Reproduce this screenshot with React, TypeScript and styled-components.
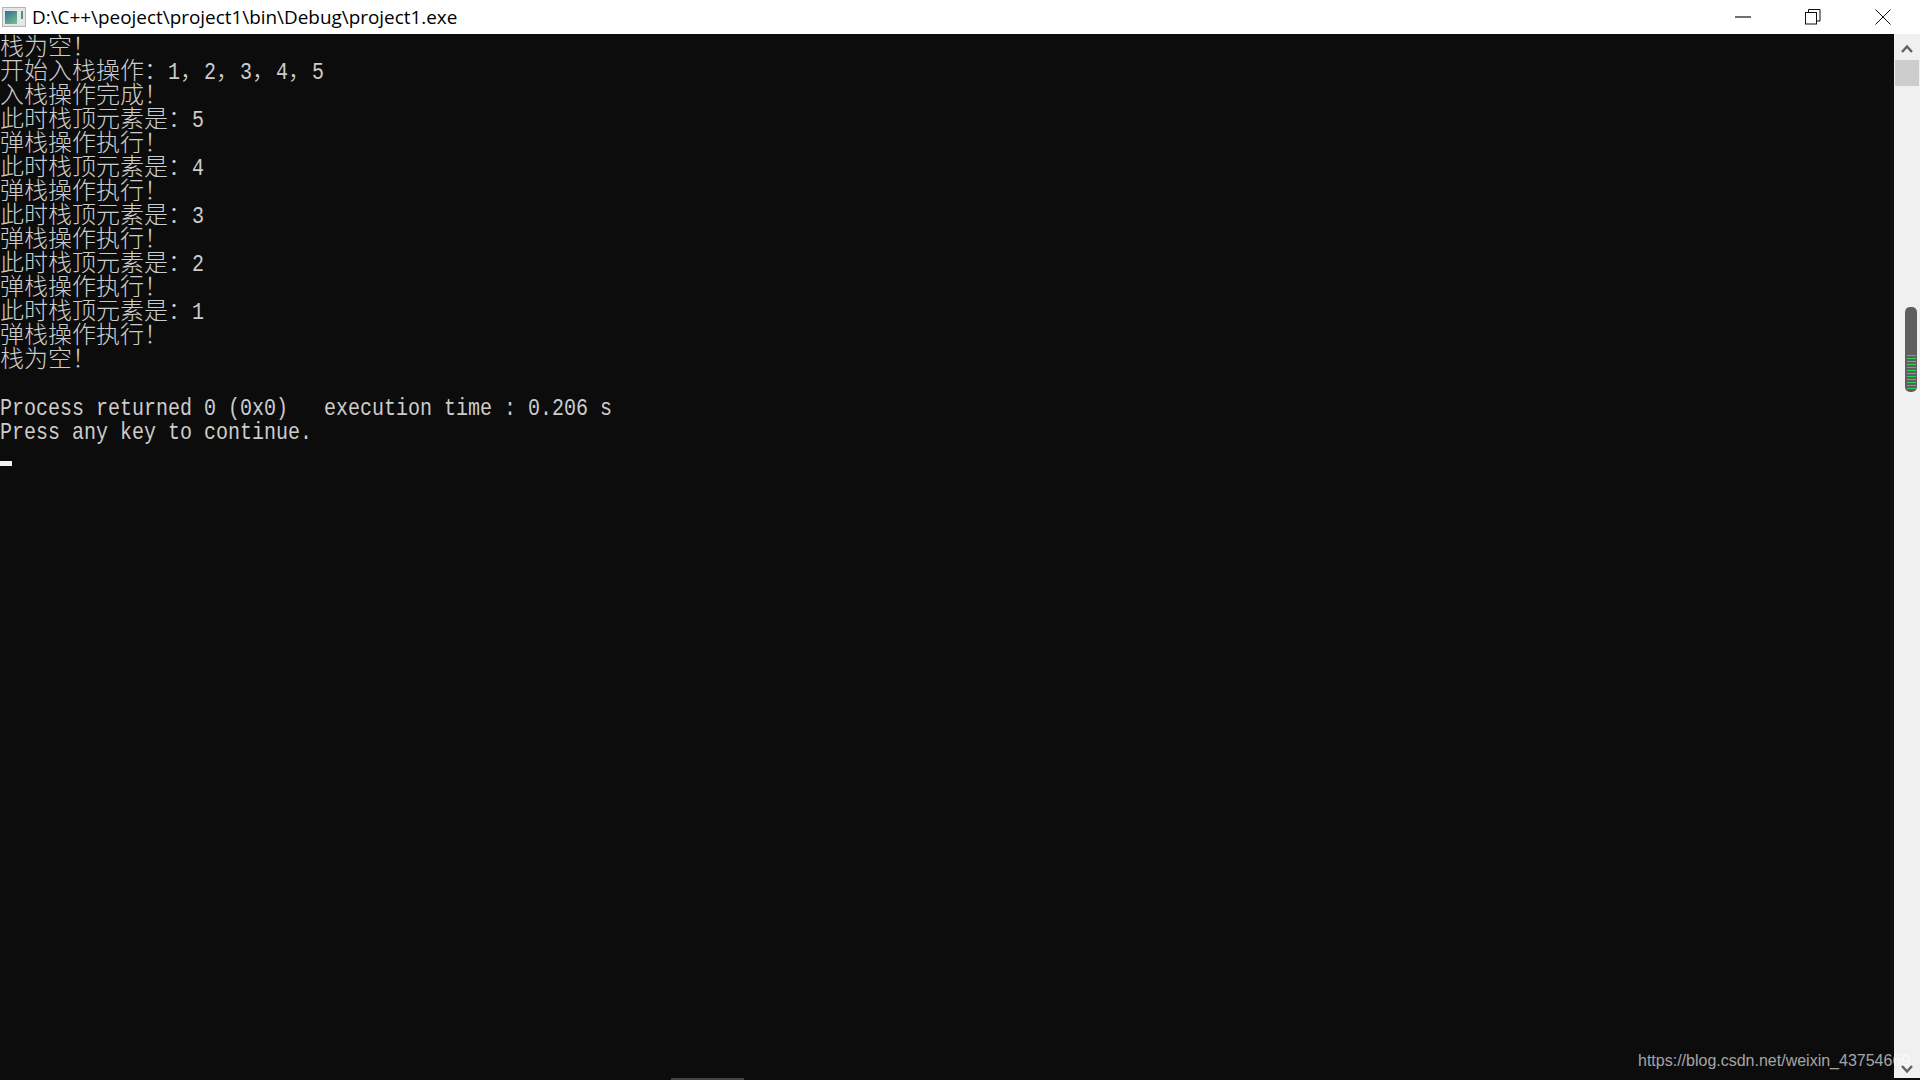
import styled, { createGlobalStyle } from "styled-components";

const GlobalStyle = createGlobalStyle`
  html, body {
    margin: 0;
    padding: 0;
    background: #0c0c0c;
    overflow: hidden;
  }
`;

const Window = styled.div`
  position: relative;
  width: 1920px;
  height: 1080px;
  display: flex;
  flex-direction: column;
  overflow: hidden;
  background: #0c0c0c;
`;

const TitleBar = styled.div`
  height: 34px;
  flex: none;
  display: flex;
  align-items: center;
  background: #fff;
`;

const AppIcon = styled.svg`
  width: 24px;
  height: 20px;
  margin: 0 6px 0 2px;
  flex: none;
`;

const Title = styled.div`
  flex: 1;
  font-family: "Open Sans", "Noto Sans", sans-serif;
  font-size: 18.9px;
  color: #000;
  white-space: nowrap;
`;

const Controls = styled.div`
  display: flex;
  height: 100%;
  padding-right: 2px;
`;

const ControlButton = styled.div`
  width: 70px;
  height: 34px;
  display: flex;
  align-items: center;
  justify-content: center;
`;

const Body = styled.div`
  flex: 1;
  display: flex;
  min-height: 0;
`;

const Console = styled.div`
  flex: 1;
  color: #cccccc;
  font-family: "Noto Sans CJK SC", sans-serif;
  font-size: 24px;
  font-weight: 300;
  line-height: 22px;
`;

const Line = styled.div`
  height: 24px;
  white-space: pre;
`;

// the console font is 12px wide per latin char at 24px tall, squeeze the mono to fit
const Ascii = styled.span`
  display: inline-block;
  margin-right: -2.4px;
  font-family: "Liberation Mono", monospace;
  font-size: 24px;
  font-weight: 400;
  transform: scaleX(0.8333);
  transform-origin: left center;
`;

const Cursor = styled.div`
  width: 12px;
  height: 5px;
  margin-top: 19px;
  background: #f2f2f2;
`;

const ScrollBar = styled.div`
  width: 26px;
  flex: none;
  height: 1044px;
  display: flex;
  flex-direction: column;
  align-items: center;
  background: #f0f0f0;
`;

const Arrow = styled.svg`
  width: 12px;
  height: 9px;
  flex: none;
`;

const TopArrow = styled(Arrow)`
  margin-top: 10px;
`;

const Thumb = styled.div`
  width: 24px;
  height: 26px;
  margin-top: 7px;
  background: #cdcdcd;
`;

const BottomArrow = styled(Arrow)`
  margin-top: auto;
  margin-bottom: 4px;
`;

const VolumeOverlay = styled.div`
  position: absolute;
  left: 1905px;
  top: 307px;
  width: 12px;
  height: 85px;
  box-sizing: border-box;
  padding: 48px 1px 0;
  display: flex;
  flex-direction: column;
  gap: 2px;
  align-items: center;
  border-radius: 5px;
  background: #5f5f5f;
`;

const VolumeTick = styled.div`
  width: 9px;
  height: 1px;
  background: #2fd158;
`;

const Watermark = styled.div`
  position: absolute;
  left: 1638px;
  top: 1051px;
  font-family: "Liberation Sans", sans-serif;
  font-size: 16px;
  line-height: 20px;
  color: rgba(255, 255, 255, 0.64);
  white-space: nowrap;
`;

const HomeBar = styled.div`
  position: absolute;
  left: 671px;
  bottom: 0;
  width: 73px;
  height: 2px;
  background: #444;
`;

const ticks = Array.from({ length: 12 });

export default function App() {
  return (
    <>
      <GlobalStyle />
      <Window>
        <TitleBar>
          <AppIcon viewBox="0 0 24 20">
            <defs>
              <linearGradient id="screen" x1="0" y1="0" x2="0.6" y2="1">
                <stop offset="0" stopColor="#2f6f9a" />
                <stop offset="1" stopColor="#6fb58a" />
              </linearGradient>
            </defs>
            <rect x="0.5" y="0.5" width="23" height="19" fill="#e6e6e6" stroke="#b4b4b4" />
            <rect x="3" y="4" width="12" height="13" fill="url(#screen)" />
            <rect x="19" y="4" width="2" height="8" fill="#4e8f8a" />
          </AppIcon>
          <Title>D:\C++\peoject\project1\bin\Debug\project1.exe</Title>
          <Controls>
            <ControlButton>
              <svg width="16" height="2" viewBox="0 0 16 2">
                <rect width="16" height="1.2" y="0.4" fill="#111" />
              </svg>
            </ControlButton>
            <ControlButton>
              <svg width="16" height="16" viewBox="0 0 16 16" fill="none" stroke="#111" strokeWidth="1">
                <rect x="0.5" y="3.5" width="11" height="11.5" />
                <path d="M3.5 3.5V0.5H15V12H11.5" />
              </svg>
            </ControlButton>
            <ControlButton>
              <svg width="16" height="16" viewBox="0 0 16 16" fill="none" stroke="#111" strokeWidth="1">
                <path d="M0.5 0.5L15.5 15.5M15.5 0.5L0.5 15.5" />
              </svg>
            </ControlButton>
          </Controls>
        </TitleBar>
        <Body>
          <Console>
            <Line>栈为空！</Line>
            <Line>开始入栈操作：<Ascii>1</Ascii>，<Ascii>2</Ascii>，<Ascii>3</Ascii>，<Ascii>4</Ascii>，<Ascii>5</Ascii></Line>
            <Line>入栈操作完成！</Line>
            <Line>此时栈顶元素是：<Ascii>5</Ascii></Line>
            <Line>弹栈操作执行！</Line>
            <Line>此时栈顶元素是：<Ascii>4</Ascii></Line>
            <Line>弹栈操作执行！</Line>
            <Line>此时栈顶元素是：<Ascii>3</Ascii></Line>
            <Line>弹栈操作执行！</Line>
            <Line>此时栈顶元素是：<Ascii>2</Ascii></Line>
            <Line>弹栈操作执行！</Line>
            <Line>此时栈顶元素是：<Ascii>1</Ascii></Line>
            <Line>弹栈操作执行！</Line>
            <Line>栈为空！</Line>
            <Line />
            <Line><Ascii>Process returned 0 (0x0)   execution time : 0.206 s</Ascii></Line>
            <Line><Ascii>Press any key to continue.</Ascii></Line>
            <Cursor />
          </Console>
          <ScrollBar>
            <TopArrow viewBox="0 0 12 9">
              <path d="M1 8L6 2.5L11 8" fill="none" stroke="#606060" strokeWidth="2.4" />
            </TopArrow>
            <Thumb />
            <BottomArrow viewBox="0 0 12 9">
              <path d="M1 1L6 6.5L11 1" fill="none" stroke="#606060" strokeWidth="2.4" />
            </BottomArrow>
          </ScrollBar>
        </Body>
        <VolumeOverlay>
          {ticks.map((_, i) => (
            <VolumeTick key={i} />
          ))}
        </VolumeOverlay>
        <Watermark>https://blog.csdn.net/weixin_43754669</Watermark>
        <HomeBar />
      </Window>
    </>
  );
}
